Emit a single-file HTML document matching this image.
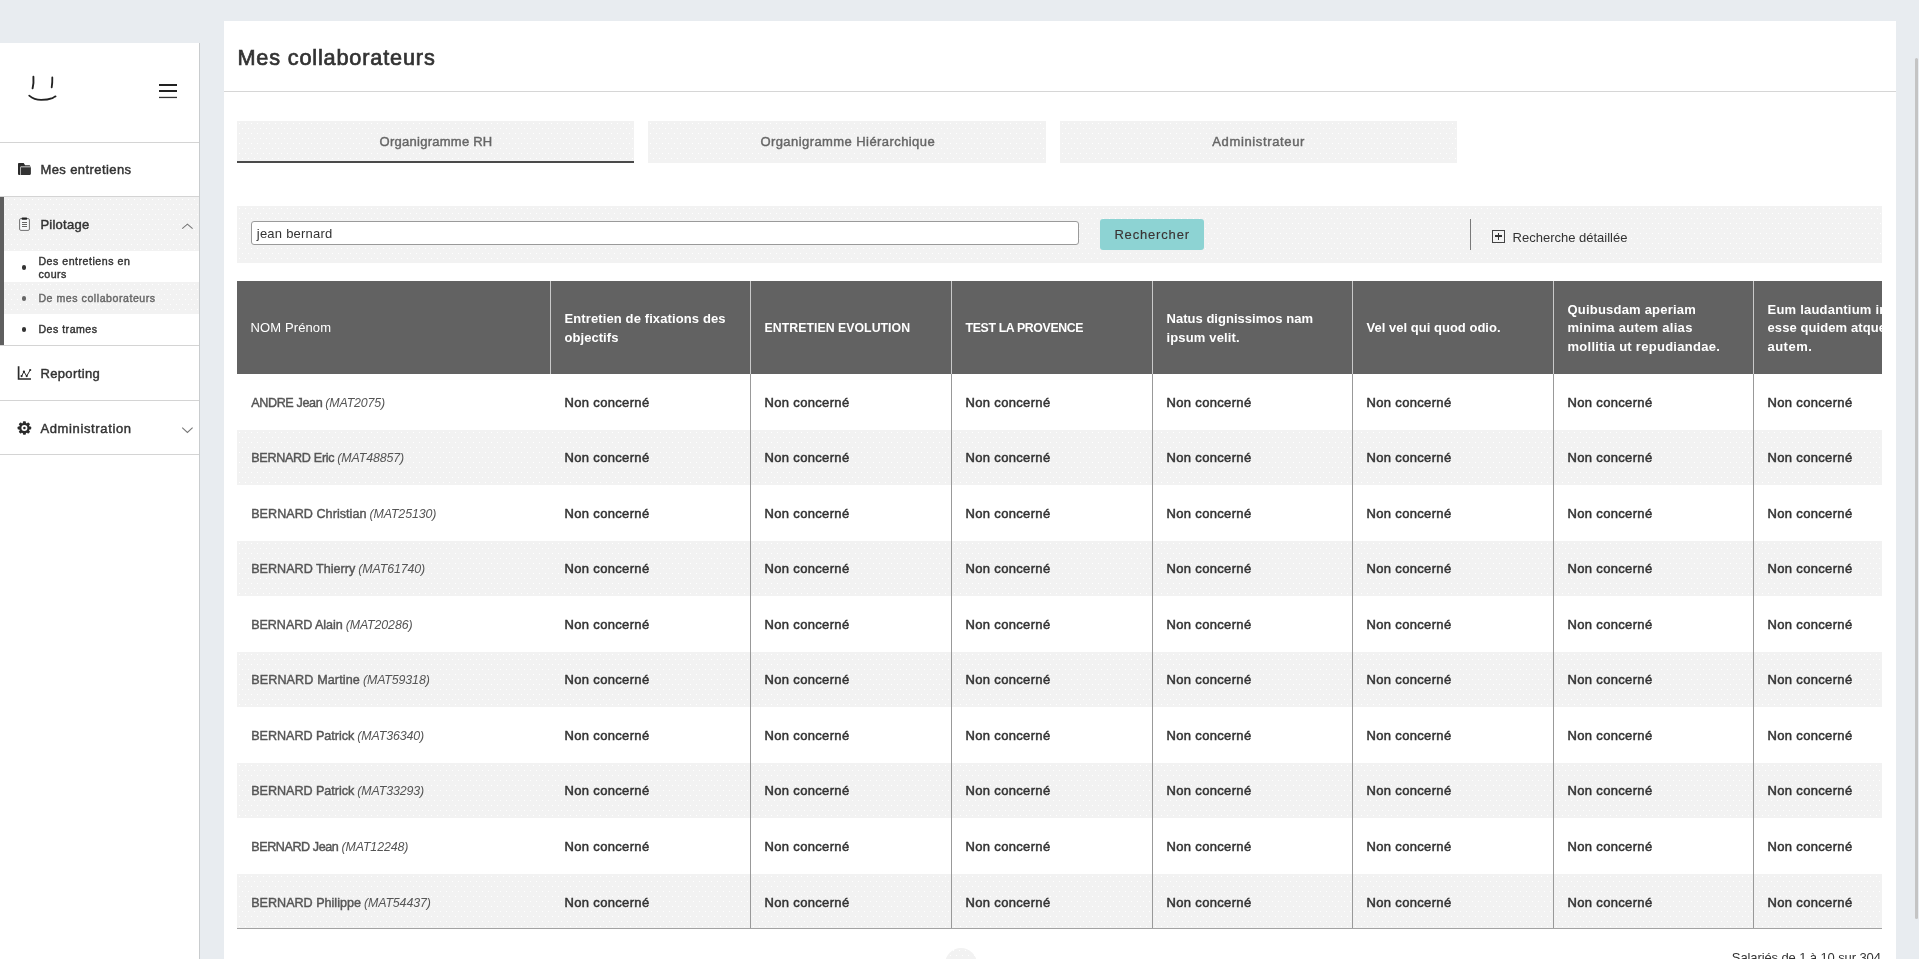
<!DOCTYPE html>
<html lang="fr">
<head>
<meta charset="utf-8">
<title>Mes collaborateurs</title>
<style>
*{box-sizing:border-box;margin:0;padding:0}
html,body{width:1919px;height:959px;overflow:hidden}
body{background:#e8ecf0;font-family:"Liberation Sans",sans-serif;color:#333;font-size:13px;position:relative}
.a{position:absolute}
.t{position:absolute;white-space:nowrap;line-height:20px}
.title{font-size:21.7px;-webkit-text-stroke:.7px #333;color:#333}
.menu{font-size:13px;-webkit-text-stroke:.45px #333;color:#333}
.sub{font-size:10.6px;-webkit-text-stroke:.4px #333;color:#333}
.sub.on{-webkit-text-stroke:.4px #666;color:#666}
.tab{font-size:13px;-webkit-text-stroke:.42px #666;color:#666}
.reg{font-size:13px;color:#333}
.btn{font-size:13px;-webkit-text-stroke:.14px #3a3333;color:#3a3333}
.th{font-size:13px;font-weight:bold;color:#fff}
.name{font-size:12.6px;-webkit-text-stroke:.42px #555;color:#555}
.mat{margin-left:-.6px;font-size:12.4px;font-style:italic;color:#555}
.nc{font-size:13px;-webkit-text-stroke:.5px #333;color:#333}
/* sidebar */
#side{will-change:transform;position:absolute;left:0;top:43px;width:200px;height:916px;background:#fff;border-right:1px solid #c9ccce}
.line{position:absolute;left:0;width:199px;height:1px;background:#d4d4d4}
.grey{background:#f2f2f2}
.dot{position:absolute;left:21.6px;width:4.6px;height:4.6px;border-radius:50%;background:#333}
/* main */
#main{will-change:transform;position:absolute;left:224px;top:21px;width:1672px;height:938px;background:#fff}
.hr{position:absolute;left:0;top:70px;width:1672px;height:1px;background:#d6d6d6}
.tabbox{position:absolute;top:100px;height:42px;background:#f2f2f2}
.tabbox.on{border-bottom:2px solid #4a4a4a}
#search{position:absolute;left:13px;top:185px;width:1645px;height:57px;background:#f2f2f2}
#search .inp{position:absolute;left:14px;top:15px;width:828px;height:24px;background:#fff;border:1px solid #9a9a9a;border-radius:3px}
#search .btnbox{position:absolute;left:863px;top:13px;width:104px;height:31px;background:#8dd3d3;border-radius:3px}
#search .vr{position:absolute;left:1233px;top:13px;width:1px;height:31px;background:#7a7a7a}
#search .plus{position:absolute;left:1255px;top:24px;width:13px;height:13px;border:1px solid #444}
#search .plus:before{content:"";position:absolute;left:2px;top:4.4px;width:7px;height:1.6px;background:#333}
#search .plus:after{content:"";position:absolute;left:4.7px;top:1.7px;width:1.6px;height:7px;background:#333}
/* table */
#tblwrap{position:absolute;left:13px;top:260px;width:1645px;height:648px;overflow:hidden;border-bottom:1px solid #a3a3a3}
table{border-collapse:separate;border-spacing:0;table-layout:fixed;width:1800px}
th{background:#626262;height:93px;text-align:left;vertical-align:middle;padding:2px 0 0 13.5px;line-height:18.5px;font-weight:normal;border-left:1px solid #c9c9c9;white-space:nowrap}
th.c1{border-left:none;padding-left:13.5px}
td{height:55.556px;padding:.5px 0 0 13.5px;line-height:20px;border-left:1px solid #999;white-space:nowrap;vertical-align:middle}
td.c1{border-left:none;padding-left:14.2px}
td.c1+td{border-left:none;padding-left:14.5px}
tr:nth-child(even) td{background:#f2f2f2}
tr.d1 td span{position:relative;top:1px}
#circ{position:absolute;left:720.5px;top:927px;width:32px;height:32px;border-radius:50%;background:#f2f2f2}
#sb{position:absolute;left:1915px;top:58px;width:3px;height:861px;background:#c4c4c4;border-radius:2px}
.grey,.tabbox,#search,tr:nth-child(even) td,#circ{background-image:radial-gradient(circle at .5px .5px,#fff .5px,rgba(255,255,255,0) .55px),radial-gradient(circle at .5px .5px,#fff .5px,rgba(255,255,255,0) .55px);background-size:6px 10px,6px 10px;background-position:2px 2px,5px 7px}
</style>
</head>
<body>
<div id="side">
  <svg class="a" style="left:0;top:0" width="199" height="99" viewBox="0 43 199 99">
    <g fill="none" stroke="#222" stroke-linecap="round" stroke-linejoin="round">
      <path d="M33.4 76.8 Q33.9 82.5 32.6 88.4" stroke-width="1.9"/>
      <path d="M52.3 77.5 Q52.5 82.5 51.7 87.4" stroke-width="1.8"/>
      <path d="M29.2 95.6 C32 98 37 99.9 41.1 99.9 C45 99.9 50 99 52.4 98.1 C53.8 97.5 54.5 96.5 55.6 96.3" stroke-width="1.7"/>
    </g>
    <rect x="159" y="84" width="18" height="2" fill="#222"/>
    <rect x="159" y="90" width="18" height="2" fill="#222"/>
    <rect x="159" y="96.8" width="18" height="1.3" fill="#333"/>
  </svg>
  <div class="line" style="top:99px"></div>
  <!-- Mes entretiens -->
  <svg class="a" style="left:16px;top:118px" width="17" height="16" viewBox="16 161 17 16">
    <path d="M18.8 163.1h4.9l1.4 2.1h4.4a.6.6 0 0 1 .6.6v.2H21.8a1.5 1.5 0 0 0-1.5 1.5V174.9H18.8a.8.8 0 0 1-.8-.8V163.9a.8.8 0 0 1 .8-.8z" fill="#2b2b2b"/>
    <rect x="20.9" y="166.1" width="10" height="2.5" rx="1" fill="#9a9a9a"/>
    <path d="M20.9 167.6h10v6.2a1.1 1.1 0 0 1-1.1 1.1h-8.9z" fill="#333"/>
  </svg>
  <span class="t menu" style="left:40.4px;top:117.3px;letter-spacing:0.415px">Mes entretiens</span>
  <div class="line" style="top:153px"></div>
  <!-- Pilotage -->
  <div class="a grey" style="left:0;top:154px;width:199px;height:54px"></div>
  <div class="a grey" style="left:0;top:239px;width:199px;height:32px"></div>
  <div class="a" style="left:0;top:154px;width:4px;height:148px;background:#5f5f5f"></div>
  <svg class="a" style="left:17px;top:173px" width="15" height="16" viewBox="17 216 15 16">
    <rect x="19.6" y="218.6" width="9.8" height="11.8" rx="1.3" fill="#f7f9fb" stroke="#707070" stroke-width="1"/>
    <rect x="21.7" y="217.4" width="5.4" height="2.3" rx=".7" fill="#222"/>
    <rect x="22" y="222" width="5" height="1" fill="#666"/><rect x="22" y="224" width="5" height="1" fill="#666"/><rect x="22" y="226" width="5" height="1" fill="#666"/>
  </svg>
  <span class="t menu" style="left:40.4px;top:172.4px;letter-spacing:0.250px">Pilotage</span>
  <svg class="a" style="left:180px;top:178px" width="15" height="10" viewBox="180 221 15 10"><path d="M182.2 228.7L187.4 224.2L192.6 228.7" fill="none" stroke="#777" stroke-width="1.1"/></svg>
  <span class="dot" style="top:222.3px"></span>
  <span class="t sub" style="left:38.4px;top:211.7px;line-height:13px;letter-spacing:0.523px">Des entretiens en<br>cours</span>
  <span class="dot" style="top:253.2px;background:#666"></span>
  <span class="t sub on" style="left:38.4px;top:249.2px;line-height:13px;letter-spacing:0.537px">De mes collaborateurs</span>
  <span class="dot" style="top:284.3px"></span>
  <span class="t sub" style="left:38.4px;top:279.7px;line-height:13px;letter-spacing:0.500px">Des trames</span>
  <div class="line" style="top:302px"></div>
  <!-- Reporting -->
  <svg class="a" style="left:16px;top:321px" width="17" height="17" viewBox="16 364 17 17">
    <path d="M18.6 366.3V379H31" fill="none" stroke="#2b2b2b" stroke-width="1.7"/>
    <path d="M21.6 376.1L23.9 371.7L26.7 376.1L30.2 370" fill="none" stroke="#2b2b2b" stroke-width="1"/>
    <circle cx="21.6" cy="376.1" r="1.1" fill="#2b2b2b"/><circle cx="23.9" cy="371.7" r="1.1" fill="#2b2b2b"/><circle cx="26.7" cy="376.1" r="1.1" fill="#2b2b2b"/><circle cx="30.2" cy="370" r="1.1" fill="#2b2b2b"/>
  </svg>
  <span class="t menu" style="left:40.4px;top:321px;letter-spacing:0.373px">Reporting</span>
  <div class="line" style="top:357px"></div>
  <!-- Administration -->
  <svg class="a" style="left:16px;top:377px" width="17" height="17" viewBox="16 420 17 17">
    <g transform="translate(24.4 428)" fill="#2b2b2b">
      <circle r="5.3"/>
      <g id="tooth"><rect x="-1.5" y="-6.8" width="3" height="3" rx=".8"/></g>
      <rect x="-1.5" y="-6.8" width="3" height="3" rx=".8" transform="rotate(45)"/><rect x="-1.5" y="-6.8" width="3" height="3" rx=".8" transform="rotate(90)"/><rect x="-1.5" y="-6.8" width="3" height="3" rx=".8" transform="rotate(135)"/><rect x="-1.5" y="-6.8" width="3" height="3" rx=".8" transform="rotate(180)"/><rect x="-1.5" y="-6.8" width="3" height="3" rx=".8" transform="rotate(225)"/><rect x="-1.5" y="-6.8" width="3" height="3" rx=".8" transform="rotate(270)"/><rect x="-1.5" y="-6.8" width="3" height="3" rx=".8" transform="rotate(315)"/>
      <circle r="3" fill="#fff"/><circle r="1.3"/>
    </g>
  </svg>
  <span class="t menu" style="left:40.4px;top:375.7px;letter-spacing:0.634px">Administration</span>
  <svg class="a" style="left:180px;top:382px" width="15" height="10" viewBox="180 425 15 10"><path d="M182.2 427.6L187.4 432.5L192.6 427.6" fill="none" stroke="#777" stroke-width="1.1"/></svg>
  <div class="line" style="top:411px"></div>
</div>
<div id="main">
  <h1 class="t title" style="left:13.4px;top:22px;line-height:30px;font-weight:normal;letter-spacing:0.832px">Mes collaborateurs</h1>
  <div class="hr"></div>
  <div class="tabbox on" style="left:13px;width:397px"></div>
  <div class="tabbox" style="left:424px;width:398px"></div>
  <div class="tabbox" style="left:836px;width:397px"></div>
  <span class="t tab" style="left:155.6px;top:111px;letter-spacing:0.256px">Organigramme RH</span>
  <span class="t tab" style="left:536.4px;top:111px;letter-spacing:0.427px">Organigramme Hiérarchique</span>
  <span class="t tab" style="left:988.3px;top:111px;letter-spacing:0.637px">Administrateur</span>
  <div id="search">
    <div class="inp"></div>
    <span class="t reg" style="left:19.8px;top:18.4px;letter-spacing:0.229px">jean bernard</span>
    <div class="btnbox"></div>
    <span class="t btn" style="left:877.4px;top:19.2px;letter-spacing:0.830px">Rechercher</span>
    <div class="vr"></div>
    <div class="plus"></div>
    <span class="t reg" style="left:1275.6px;top:22.2px;letter-spacing:-0.002px">Recherche détaillée</span>
  </div>
  <div id="tblwrap">
<table>
<colgroup><col style="width:313px"><col style="width:200px"><col style="width:201px"><col style="width:201px"><col style="width:200px"><col style="width:201px"><col style="width:200px"><col style="width:284px"></colgroup>
<thead><tr><th class="c1"><span class="reg" style="color:#fff;letter-spacing:0.117px">NOM Prénom</span></th><th><span class="th" style="letter-spacing:0.112px">Entretien de fixations des</span><br><span class="th" style="letter-spacing:0.057px">objectifs</span></th><th><span class="th" style="letter-spacing:0.040px;font-size:12.3px">ENTRETIEN EVOLUTION</span></th><th><span class="th" style="letter-spacing:-0.343px;font-size:12.3px">TEST LA PROVENCE</span></th><th><span class="th" style="letter-spacing:0.027px">Natus dignissimos nam</span><br><span class="th" style="letter-spacing:0.151px">ipsum velit.</span></th><th><span class="th" style="letter-spacing:0.022px">Vel vel qui quod odio.</span></th><th><span class="th" style="letter-spacing:0.202px">Quibusdam aperiam</span><br><span class="th" style="letter-spacing:0.290px">minima autem alias</span><br><span class="th" style="letter-spacing:0.279px">mollitia ut repudiandae.</span></th><th><span class="th" style="letter-spacing:0.212px">Eum laudantium in</span><br><span class="th" style="letter-spacing:0.090px">esse quidem atque</span><br><span class="th" style="letter-spacing:0.474px">autem.</span></th></tr></thead>
<tbody>
<tr class="d1"><td class="c1"><span class="name" style="letter-spacing:-0.380px">ANDRE Jean</span> <span class="mat" style="letter-spacing:-0.150px">(MAT2075)</span></td><td><span class="nc" style="letter-spacing:0.335px">Non concerné</span></td><td><span class="nc" style="letter-spacing:0.335px">Non concerné</span></td><td><span class="nc" style="letter-spacing:0.335px">Non concerné</span></td><td><span class="nc" style="letter-spacing:0.335px">Non concerné</span></td><td><span class="nc" style="letter-spacing:0.335px">Non concerné</span></td><td><span class="nc" style="letter-spacing:0.335px">Non concerné</span></td><td><span class="nc" style="letter-spacing:0.335px">Non concerné</span></td></tr>
<tr><td class="c1"><span class="name" style="letter-spacing:-0.303px">BERNARD Eric</span> <span class="mat" style="letter-spacing:-0.120px">(MAT48857)</span></td><td><span class="nc" style="letter-spacing:0.335px">Non concerné</span></td><td><span class="nc" style="letter-spacing:0.335px">Non concerné</span></td><td><span class="nc" style="letter-spacing:0.335px">Non concerné</span></td><td><span class="nc" style="letter-spacing:0.335px">Non concerné</span></td><td><span class="nc" style="letter-spacing:0.335px">Non concerné</span></td><td><span class="nc" style="letter-spacing:0.335px">Non concerné</span></td><td><span class="nc" style="letter-spacing:0.335px">Non concerné</span></td></tr>
<tr class="d1"><td class="c1"><span class="name" style="letter-spacing:0.029px">BERNARD Christian</span> <span class="mat" style="letter-spacing:-0.120px">(MAT25130)</span></td><td><span class="nc" style="letter-spacing:0.335px">Non concerné</span></td><td><span class="nc" style="letter-spacing:0.335px">Non concerné</span></td><td><span class="nc" style="letter-spacing:0.335px">Non concerné</span></td><td><span class="nc" style="letter-spacing:0.335px">Non concerné</span></td><td><span class="nc" style="letter-spacing:0.335px">Non concerné</span></td><td><span class="nc" style="letter-spacing:0.335px">Non concerné</span></td><td><span class="nc" style="letter-spacing:0.335px">Non concerné</span></td></tr>
<tr><td class="c1"><span class="name" style="letter-spacing:0.004px">BERNARD Thierry</span> <span class="mat" style="letter-spacing:-0.120px">(MAT61740)</span></td><td><span class="nc" style="letter-spacing:0.335px">Non concerné</span></td><td><span class="nc" style="letter-spacing:0.335px">Non concerné</span></td><td><span class="nc" style="letter-spacing:0.335px">Non concerné</span></td><td><span class="nc" style="letter-spacing:0.335px">Non concerné</span></td><td><span class="nc" style="letter-spacing:0.335px">Non concerné</span></td><td><span class="nc" style="letter-spacing:0.335px">Non concerné</span></td><td><span class="nc" style="letter-spacing:0.335px">Non concerné</span></td></tr>
<tr class="d1"><td class="c1"><span class="name" style="letter-spacing:-0.071px">BERNARD Alain</span> <span class="mat" style="letter-spacing:-0.120px">(MAT20286)</span></td><td><span class="nc" style="letter-spacing:0.335px">Non concerné</span></td><td><span class="nc" style="letter-spacing:0.335px">Non concerné</span></td><td><span class="nc" style="letter-spacing:0.335px">Non concerné</span></td><td><span class="nc" style="letter-spacing:0.335px">Non concerné</span></td><td><span class="nc" style="letter-spacing:0.335px">Non concerné</span></td><td><span class="nc" style="letter-spacing:0.335px">Non concerné</span></td><td><span class="nc" style="letter-spacing:0.335px">Non concerné</span></td></tr>
<tr><td class="c1"><span class="name" style="letter-spacing:0.108px">BERNARD Martine</span> <span class="mat" style="letter-spacing:-0.120px">(MAT59318)</span></td><td><span class="nc" style="letter-spacing:0.335px">Non concerné</span></td><td><span class="nc" style="letter-spacing:0.335px">Non concerné</span></td><td><span class="nc" style="letter-spacing:0.335px">Non concerné</span></td><td><span class="nc" style="letter-spacing:0.335px">Non concerné</span></td><td><span class="nc" style="letter-spacing:0.335px">Non concerné</span></td><td><span class="nc" style="letter-spacing:0.335px">Non concerné</span></td><td><span class="nc" style="letter-spacing:0.335px">Non concerné</span></td></tr>
<tr class="d1"><td class="c1"><span class="name" style="letter-spacing:-0.034px">BERNARD Patrick</span> <span class="mat" style="letter-spacing:-0.120px">(MAT36340)</span></td><td><span class="nc" style="letter-spacing:0.335px">Non concerné</span></td><td><span class="nc" style="letter-spacing:0.335px">Non concerné</span></td><td><span class="nc" style="letter-spacing:0.335px">Non concerné</span></td><td><span class="nc" style="letter-spacing:0.335px">Non concerné</span></td><td><span class="nc" style="letter-spacing:0.335px">Non concerné</span></td><td><span class="nc" style="letter-spacing:0.335px">Non concerné</span></td><td><span class="nc" style="letter-spacing:0.335px">Non concerné</span></td></tr>
<tr><td class="c1"><span class="name" style="letter-spacing:-0.034px">BERNARD Patrick</span> <span class="mat" style="letter-spacing:-0.120px">(MAT33293)</span></td><td><span class="nc" style="letter-spacing:0.335px">Non concerné</span></td><td><span class="nc" style="letter-spacing:0.335px">Non concerné</span></td><td><span class="nc" style="letter-spacing:0.335px">Non concerné</span></td><td><span class="nc" style="letter-spacing:0.335px">Non concerné</span></td><td><span class="nc" style="letter-spacing:0.335px">Non concerné</span></td><td><span class="nc" style="letter-spacing:0.335px">Non concerné</span></td><td><span class="nc" style="letter-spacing:0.335px">Non concerné</span></td></tr>
<tr class="d1"><td class="c1"><span class="name" style="letter-spacing:-0.428px">BERNARD Jean</span> <span class="mat" style="letter-spacing:-0.120px">(MAT12248)</span></td><td><span class="nc" style="letter-spacing:0.335px">Non concerné</span></td><td><span class="nc" style="letter-spacing:0.335px">Non concerné</span></td><td><span class="nc" style="letter-spacing:0.335px">Non concerné</span></td><td><span class="nc" style="letter-spacing:0.335px">Non concerné</span></td><td><span class="nc" style="letter-spacing:0.335px">Non concerné</span></td><td><span class="nc" style="letter-spacing:0.335px">Non concerné</span></td><td><span class="nc" style="letter-spacing:0.335px">Non concerné</span></td></tr>
<tr class="d1"><td class="c1"><span class="name" style="letter-spacing:-0.010px">BERNARD Philippe</span> <span class="mat" style="letter-spacing:-0.120px">(MAT54437)</span></td><td><span class="nc" style="letter-spacing:0.335px">Non concerné</span></td><td><span class="nc" style="letter-spacing:0.335px">Non concerné</span></td><td><span class="nc" style="letter-spacing:0.335px">Non concerné</span></td><td><span class="nc" style="letter-spacing:0.335px">Non concerné</span></td><td><span class="nc" style="letter-spacing:0.335px">Non concerné</span></td><td><span class="nc" style="letter-spacing:0.335px">Non concerné</span></td><td><span class="nc" style="letter-spacing:0.335px">Non concerné</span></td></tr>
</tbody>
</table>
  </div>
  <div id="circ"></div>
  <span class="t reg" style="right:15.2px;top:926.6px;letter-spacing:-0.108px">Salariés de 1 à 10 sur 304</span>
</div>
<div id="sb"></div>
</body>
</html>
